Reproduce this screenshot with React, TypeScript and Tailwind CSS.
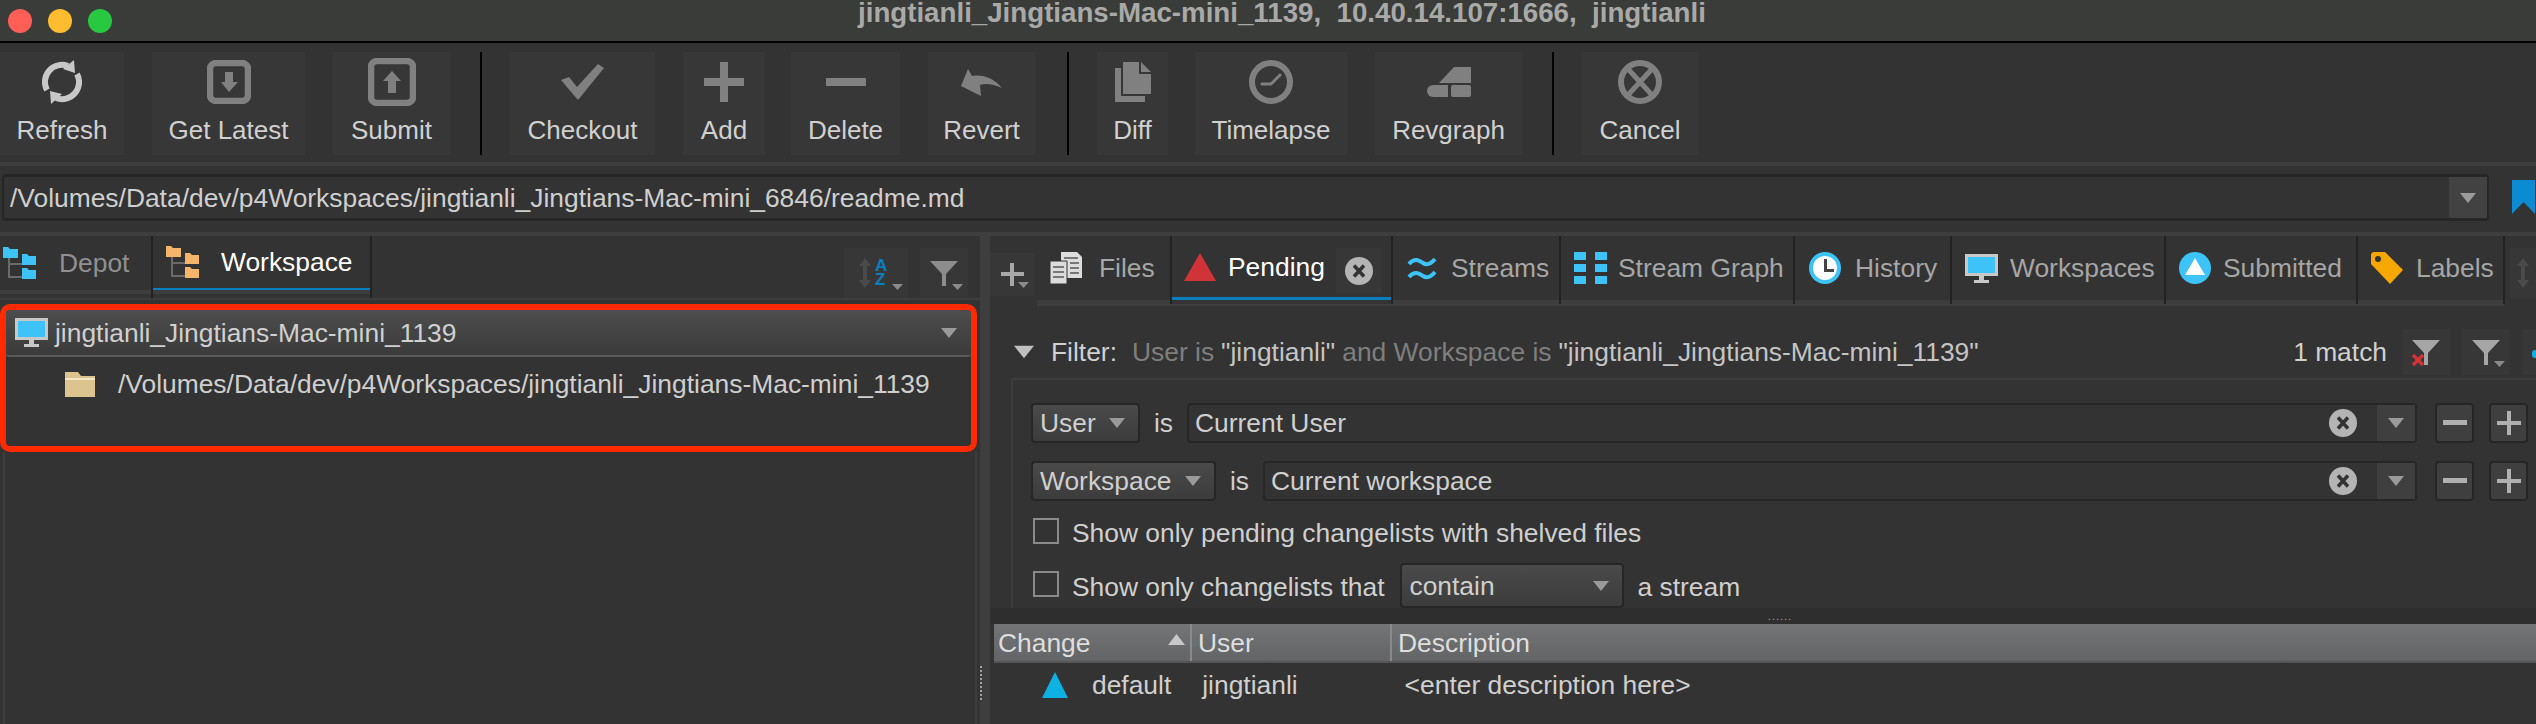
import React from "react";

const G = "#808080";

function Caret({ className = "", color = "#9a9a9a" }: { className?: string; color?: string }) {
  return (
    <svg width="18" height="12" viewBox="0 0 18 12" className={className}>
      <path d="M1 1h16L9 11z" fill={color} />
    </svg>
  );
}

function SmallCaret() {
  return (
    <svg width="11" height="6" viewBox="0 0 11 6" className="absolute right-[5px] bottom-[8px]">
      <path d="M0 0h11L5.5 6z" fill="#8a8a8a" />
    </svg>
  );
}

function RefreshIcon() {
  return (
    <svg width="40" height="44" viewBox="0 0 40 44" fill="none">
      <path d="M5 30A17 17 0 0 1 26 6" stroke="#c8c8c8" strokeWidth="6" />
      <path d="M35 14A17 17 0 0 1 14 38" stroke="#c8c8c8" strokeWidth="6" />
      <path d="M32 0l1 13-12-4z" fill="#c8c8c8" />
      <path d="M9 44 8 31l12 3z" fill="#c8c8c8" />
    </svg>
  );
}

function GetLatestIcon() {
  return (
    <svg width="44" height="44" viewBox="0 0 44 44">
      <rect x="3" y="3" width="38" height="38" rx="6" fill="none" stroke={G} strokeWidth="6.5" />
      <path d="M18 12h8v10h5L22 32 14 22h4z" fill={G} />
    </svg>
  );
}

function SubmitIcon() {
  return (
    <svg width="48" height="48" viewBox="0 0 48 48">
      <rect x="3" y="3" width="42" height="42" rx="6" fill="none" stroke={G} strokeWidth="6.5" />
      <path d="M20 35V23h-5l9-10 9 10h-5v12z" fill={G} />
    </svg>
  );
}

function CheckIcon() {
  return (
    <svg width="44" height="36" viewBox="0 0 44 36">
      <path d="M0 16l8-3 8 10L37 0l6 4-26 32z" fill={G} />
    </svg>
  );
}

function PlusIcon() {
  return (
    <svg width="40" height="40" viewBox="0 0 40 40">
      <path d="M16 0h8v16h16v8H24v16h-8V24H0v-8h16z" fill={G} />
    </svg>
  );
}

function MinusIcon() {
  return (
    <svg width="40" height="8" viewBox="0 0 40 8">
      <rect width="40" height="8" fill={G} />
    </svg>
  );
}

function RevertIcon() {
  return (
    <svg width="41" height="27" viewBox="0 0 41 27">
      <path d="M0 17 7 0l4 7C22 5 34 10 41 19 32 15 25 14 19 16l1 11z" fill={G} />
    </svg>
  );
}

function DiffIcon() {
  return (
    <svg width="36" height="40" viewBox="0 0 36 40">
      <path d="M0 6h6v28h24v6H0z" fill={G} />
      <path d="M8 0h16v12h12v20H8z" fill={G} />
      <path d="M26 0l10 10H26z" fill={G} />
    </svg>
  );
}

function TimelapseIcon() {
  return (
    <svg width="44" height="44" viewBox="0 0 44 44">
      <circle cx="22" cy="22" r="19" fill="none" stroke={G} strokeWidth="6" />
      <path d="M13 24h9l9-9" fill="none" stroke={G} strokeWidth="3" strokeLinecap="round" />
    </svg>
  );
}

function RevgraphIcon() {
  return (
    <svg width="44" height="30" viewBox="0 0 44 30">
      <path d="M27 0h17v16H12z" fill={G} />
      <rect x="24" y="18" width="20" height="12" rx="2" fill={G} />
      <path d="M6 18h15v12H6a6 6 0 0 1 0-12z" fill={G} />
    </svg>
  );
}

function CancelIcon() {
  return (
    <svg width="44" height="44" viewBox="0 0 44 44">
      <circle cx="22" cy="22" r="19" fill="none" stroke={G} strokeWidth="6" />
      <path d="M10 9l24 26M34 9 10 35" stroke={G} strokeWidth="5" />
    </svg>
  );
}

function ClearIcon({ size = 28 }: { size?: number }) {
  return (
    <svg width={size} height={size} viewBox="0 0 28 28">
      <circle cx="14" cy="14" r="14" fill="#b4b4b4" />
      <path d="M9 8.5l10 11M19 8.5 9 19.5" stroke="#333" strokeWidth="3.5" />
    </svg>
  );
}

function TreeIcon({ color }: { color: string }) {
  return (
    <svg width="33" height="32" viewBox="0 0 33 32">
      <path d="M6 9v21h14M6 17h14" fill="none" stroke="#6a6a6a" strokeWidth="2" />
      <path d="M0 2h5l2 2h8v9H0z" fill={color} transform="translate(0 -2)" />
      <path d="M19 7h5l2 2h7v9H19z" fill={color} />
      <path d="M19 21h5l2 2h7v9H19z" fill={color} />
    </svg>
  );
}

function MonitorIcon() {
  return (
    <svg width="33" height="29" viewBox="0 0 33 29">
      <rect x="1.5" y="1.5" width="30" height="19" fill="#3dc3f7" stroke="#c8c8c8" strokeWidth="3" />
      <rect x="14" y="22" width="5" height="4" fill="#c8c8c8" />
      <rect x="9" y="26" width="15" height="3" fill="#c8c8c8" />
    </svg>
  );
}

function FilesIcon() {
  return (
    <svg width="32" height="32" viewBox="0 0 32 32">
      <path d="M11 0h16l5 5v21H11z" fill="#dcdcdc" />
      <path d="M0 9h17v23H0z" fill="#dcdcdc" stroke="#333" strokeWidth="1" />
      <path d="M14 6h14M20 11h9M20 16h9M20 21h9M3 15h11M3 20h11M3 25h11" stroke="#555" strokeWidth="1.5" />
    </svg>
  );
}

function StreamsIcon() {
  return (
    <svg width="30" height="24" viewBox="0 0 30 24" fill="none">
      <path d="M2 8c6-7 11-3 14-1s7 2 12-4" stroke="#3dc3f7" strokeWidth="4" />
      <path d="M2 21c6-7 11-3 14-1s7 2 12-4" stroke="#3dc3f7" strokeWidth="4" />
    </svg>
  );
}

function GridIcon() {
  return (
    <svg width="33" height="32" viewBox="0 0 33 32" fill="#3dc3f7">
      <rect width="12" height="8" />
      <rect x="21" width="12" height="8" />
      <rect y="12" width="12" height="8" />
      <rect x="21" y="12" width="12" height="8" />
      <rect y="24" width="12" height="8" />
      <rect x="21" y="24" width="12" height="8" />
    </svg>
  );
}

function HistoryIcon() {
  return (
    <svg width="32" height="32" viewBox="0 0 32 32">
      <circle cx="16" cy="16" r="16" fill="#3dc3f7" />
      <circle cx="16" cy="16" r="12" fill="#fff" />
      <path d="M15 7h3v10h7v3H15z" fill="#444" />
    </svg>
  );
}

function SubmittedIcon() {
  return (
    <svg width="32" height="32" viewBox="0 0 32 32">
      <circle cx="16" cy="16" r="16" fill="#3dc3f7" />
      <path d="M16 6l10 17H6z" fill="#fff" />
    </svg>
  );
}

function LabelIcon() {
  return (
    <svg width="32" height="32" viewBox="0 0 32 32">
      <path d="M2 0h12l18 18-13 14L0 12V2z" fill="#f6a800" />
      <circle cx="7" cy="7" r="3" fill="#333" />
    </svg>
  );
}

function SortIcon() {
  return (
    <svg width="30" height="42" viewBox="0 -6 30 42" className="absolute left-[15px] top-[4px]">
      <path d="M6 0l6 8H8v14h4l-6 8-6-8h4V8H0z" fill="#4a4a4a" />
      <text x="16" y="13" fontSize="17" fontWeight="700" fill="#0a7fc0">A</text>
      <text x="16" y="27" fontSize="17" fontWeight="700" fill="#0a7fc0">Z</text>
    </svg>
  );
}

function FunnelIcon({ color = "#8c8c8c" }: { color?: string }) {
  return (
    <svg width="28" height="25" viewBox="0 0 28 25">
      <path d="M0 0h28L16 13v12h-4V13z" fill={color} />
    </svg>
  );
}

const toolbar = [
  { label: "Refresh", icon: <RefreshIcon />, cls: "w-[124px]" },
  { label: "Get Latest", icon: <GetLatestIcon />, cls: "ml-[28px] w-[153px]" },
  { label: "Submit", icon: <SubmitIcon />, cls: "ml-[28px] w-[117px]" },
  { sep: true, cls: "ml-[30px]" },
  { label: "Checkout", icon: <CheckIcon />, cls: "ml-[28px] w-[145px]" },
  { label: "Add", icon: <PlusIcon />, cls: "ml-[28px] w-[82px]" },
  { label: "Delete", icon: <MinusIcon />, cls: "ml-[26px] w-[109px]" },
  { label: "Revert", icon: <RevertIcon />, cls: "ml-[28px] w-[107px]" },
  { sep: true, cls: "ml-[32px]" },
  { label: "Diff", icon: <DiffIcon />, cls: "ml-[28px] w-[71px]" },
  { label: "Timelapse", icon: <TimelapseIcon />, cls: "ml-[27px] w-[152px]" },
  { label: "Revgraph", icon: <RevgraphIcon />, cls: "ml-[28px] w-[147px]" },
  { sep: true, cls: "ml-[30px]" },
  { label: "Cancel", icon: <CancelIcon />, cls: "ml-[28px] w-[116px]" },
];

function Toolbar() {
  return (
    <div className="flex h-[119px] shrink-0 pt-[9px] pb-[7px] bg-[#333333]">
      {toolbar.map((item, i) =>
        item.sep ? (
          <div key={i} className={`w-[2px] bg-black ${item.cls}`} />
        ) : (
          <div key={i} className={`flex flex-col items-center bg-[#373737] ${item.cls}`}>
            <div className="flex h-[60px] items-center justify-center">{item.icon}</div>
            <div className="mt-[3px] text-[26px] text-[#d0d0d0] leading-[30px]">{item.label}</div>
          </div>
        )
      )}
    </div>
  );
}

const tabs = [
  { label: "Files", icon: <FilesIcon />, cls: "w-[133px] pl-[13px] gap-[17px]" },
  { label: "Pending", icon: null, cls: "" },
  { label: "Streams", icon: <StreamsIcon />, cls: "w-[166px] pl-[14px] gap-[14px]" },
  { label: "Stream Graph", icon: <GridIcon />, cls: "w-[232px] pl-[13px] gap-[11px]" },
  { label: "History", icon: <HistoryIcon />, cls: "w-[155px] pl-[14px] gap-[14px]" },
  { label: "Workspaces", icon: <MonitorIcon />, cls: "w-[212px] pl-[13px] gap-[12px]" },
  { label: "Submitted", icon: <SubmittedIcon />, cls: "w-[190px] pl-[13px] gap-[12px]" },
  { label: "Labels", icon: <LabelIcon />, cls: "w-[145px] pl-[13px] gap-[13px]" },
];

function RightTabs() {
  return (
    <div className="relative flex h-[70px] shrink-0">
      <div className="absolute left-[47px] right-[32px] bottom-0 h-[2px] bg-[#3f3f3f]" />
      <div className="relative mt-[17px] h-[43px] w-[44px] bg-[#373737]">
        <svg width="23" height="23" viewBox="0 0 23 23" className="absolute left-[11px] top-[10px]">
          <path d="M9 0h4v9h10v4H13v10H9V13H0V9h9z" fill="#a8a8a8" />
        </svg>
        <SmallCaret />
      </div>
      <div className="w-[3px]" />
      {tabs.map((t) =>
        t.label === "Pending" ? (
          <div key={t.label} className="flex h-[68px] w-[221px] flex-col border-r-2 border-[#222]">
            <div className="relative flex h-[61px] items-center pl-[12px] text-white">
              <svg width="32" height="28" viewBox="0 0 32 28">
                <path d="M16 0l16 28H0z" fill="#d13438" />
              </svg>
              <span className="ml-[12px]">Pending</span>
              <div className="absolute left-[164px] top-[12px] flex h-[46px] w-[46px] items-center justify-center bg-[#373737]">
                <ClearIcon />
              </div>
            </div>
            <div className="h-[3px] bg-[#0a7fc0]" />
          </div>
        ) : (
          <div key={t.label} className="flex h-[68px] flex-col border-r-2 border-[#222]">
            <div className={`flex h-[64px] items-center text-[#a6a6a6] ${t.cls}`}>
              {t.icon}
              <span>{t.label}</span>
            </div>
            <div className="h-[4px] bg-[#3d3d3d]" />
          </div>
        )
      )}
      <div className="relative ml-[5px] mt-[12px] h-[50px] flex-1 bg-[#373737]">
        <svg width="14" height="30" viewBox="0 0 14 30" className="absolute left-[6px] top-[10px]">
          <path d="M7 0l6 8H9v14h4l-6 8-6-8h4V8H1z" fill="#4a4a4a" />
        </svg>
      </div>
    </div>
  );
}

function Combo({ label, cls }: { label: string; cls: string }) {
  return (
    <div className={`flex h-[40px] items-center justify-between rounded-[4px] border-2 border-[#262626] bg-gradient-to-b from-[#4a4a4a] to-[#3c3c3c] pl-[7px] pr-[12px] text-[#cfcfcf] ${cls}`}>
      <span>{label}</span>
      <Caret />
    </div>
  );
}

function SquareBtn({ plus }: { plus?: boolean }) {
  return (
    <div className="flex h-[40px] w-[39px] items-center justify-center rounded-[4px] border-2 border-[#262626] bg-[#3f3f3f]">
      <svg width="24" height="24" viewBox="0 0 24 24">
        {plus ? <path d="M10 0h4v10h10v4H14v10h-4V14H0v-4h10z" fill="#b0b0b0" /> : <rect y="9" width="24" height="5" fill="#b0b0b0" />}
      </svg>
    </div>
  );
}

function FilterRow({ field, fieldCls, value }: { field: string; fieldCls: string; value: string }) {
  return (
    <div className="flex h-[40px] items-center pl-[18px] pr-[8px]">
      <Combo label={field} cls={fieldCls} />
      <span className="ml-[14px] w-[33px] text-[#cfcfcf]">is</span>
      <div className="flex h-[40px] flex-1 items-center rounded-[4px] border-2 border-[#262626] pl-[6px] text-[#cfcfcf]">
        <span className="flex-1">{value}</span>
        <ClearIcon />
        <div className="ml-[20px] flex h-full w-[38px] items-center justify-center bg-[#3f3f3f]">
          <Caret />
        </div>
      </div>
      <div className="ml-[18px]"><SquareBtn /></div>
      <div className="ml-[15px]"><SquareBtn plus /></div>
    </div>
  );
}

function FilterPanel() {
  return (
    <div className="mt-[24px] flex min-h-0 flex-col">
      <div className="flex h-[48px] items-center pl-[25px] pb-[4px]">
        <Caret className="scale-125" color="#c0c0c0" />
        <span className="ml-[18px] text-[#d0d0d0]">Filter:</span>
        <span className="ml-[15px] text-[#7f7f7f]">User is </span>
        <span className="ml-[7px] text-[#c4c4c4]">"jingtianli"</span>
        <span className="ml-[7px] text-[#7f7f7f]">and Workspace is </span>
        <span className="ml-[7px] text-[#c4c4c4]">"jingtianli_Jingtians-Mac-mini_1139"</span>
        <span className="ml-auto text-[#d0d0d0]">1 match</span>
        <div className="relative ml-[15px] flex h-[46px] w-[48px] items-center justify-center bg-[#373737]">
          <FunnelIcon color="#a6a6a6" />
          <svg width="14" height="14" viewBox="0 0 14 14" className="absolute left-[9px] bottom-[8px]">
            <path d="M2 2l10 10M12 2 2 12" stroke="#d13438" strokeWidth="3.5" />
          </svg>
        </div>
        <div className="relative ml-[12px] flex h-[46px] w-[48px] items-center justify-center bg-[#373737]">
          <FunnelIcon color="#a6a6a6" />
          <SmallCaret />
        </div>
        <div className="ml-[12px] h-[46px] w-[14px] bg-[#373737] pt-[21px] pl-[10px]">
          <div className="h-[8px] w-[4px] rounded-l-[3px] bg-[#0db1e4]" />
        </div>
      </div>
      <div className="ml-[21px] flex h-[230px] flex-col overflow-hidden border-t-2 border-l-2 border-[#3c3c3c]">
        <div className="mt-[23px] flex flex-col gap-[18px]">
          <FilterRow field="User" fieldCls="w-[109px]" value="Current User" />
          <FilterRow field="Workspace" fieldCls="w-[185px]" value="Current workspace" />
        </div>
        <div className="mt-[17px] flex h-[26px] items-center pl-[20px]">
          <div className="h-[26px] w-[26px] border-2 border-[#8a8a8a]" />
          <span className="ml-[13px] mt-[4px] text-[#cfcfcf]">Show only pending changelists with shelved files</span>
        </div>
        <div className="mt-[19px] flex h-[45px] items-center pl-[20px]">
          <div className="mb-[4px] h-[26px] w-[26px] border-2 border-[#8a8a8a]" />
          <span className="ml-[13px] mt-[2px] text-[#cfcfcf]">Show only changelists that</span>
          <Combo label="contain" cls="ml-[16px] !h-[45px] w-[224px]" />
          <span className="ml-[13px] mt-[2px] text-[#cfcfcf]">a stream</span>
        </div>
      </div>
    </div>
  );
}

function Table() {
  return (
    <div className="flex flex-1 flex-col">
      <div className="flex h-[16px] items-center justify-center bg-[#2e2e2e] pl-[34px]">
        <span className="text-[11px] leading-[11px] tracking-[1px] text-[#a0a0a0]">......</span>
      </div>
      <div className="ml-[4px] flex h-[39px] bg-gradient-to-b from-[#747577] to-[#636466] text-[#dedede] border-b-2 border-[#555]">
        <div className="relative flex w-[198px] items-center pl-[4px] border-r-2 border-[#8a8a8a]">
          Change
          <svg width="17" height="11" viewBox="0 0 17 11" className="absolute left-[174px] top-[10px]">
            <path d="M8.5 0 17 11H0z" fill="#c8c8c8" />
          </svg>
        </div>
        <div className="flex w-[200px] items-center pl-[6px] border-r-2 border-[#8a8a8a]">User</div>
        <div className="flex flex-1 items-center pl-[6px]">Description</div>
      </div>
      <div className="flex h-[44px] items-center text-[#cfcfcf]">
        <svg width="26" height="26" viewBox="0 0 26 26" className="ml-[52px]">
          <path d="M13 0l13 26H0z" fill="#0db1e4" />
        </svg>
        <span className="ml-[24px]">default</span>
        <span className="ml-[31px]">jingtianli</span>
        <span className="ml-[107px]">&lt;enter description here&gt;</span>
      </div>
    </div>
  );
}

export default function App() {
  return (
    <div className="flex h-[724px] w-[2536px] flex-col overflow-hidden bg-[#333333] font-['Liberation_Sans',sans-serif] text-[26.4px] leading-[30px]">
      {/* title bar */}
      <div className="relative flex h-[43px] shrink-0 items-center border-b-2 border-black bg-[#3a3c39] pl-[8px]">
        <div className="flex gap-[16px]">
          <div className="h-[24px] w-[24px] rounded-full bg-[#ff5f57]" />
          <div className="h-[24px] w-[24px] rounded-full bg-[#febc2e]" />
          <div className="h-[24px] w-[24px] rounded-full bg-[#28c840]" />
        </div>
        <div className="absolute left-[858px] top-0 whitespace-pre text-[27.7px] leading-[26px] font-bold text-[#a9aaa8]">
          jingtianli_Jingtians-Mac-mini_1139,  10.40.14.107:1666,  jingtianli
        </div>
      </div>

      <Toolbar />
      <div className="h-[4px] shrink-0 bg-[#3e3e3e]" />

      {/* path bar */}
      <div className="flex h-[66px] shrink-0 items-start bg-[#333333] pl-[2px] pt-[8px]">
        <div className="flex h-[47px] w-[2487px] items-center rounded-[4px] border-y-[3px] border-x-2 border-[#262626] pl-[6px] text-[#cfcfcf]">
          <span className="flex-1">/Volumes/Data/dev/p4Workspaces/jingtianli_Jingtians-Mac-mini_6846/readme.md</span>
          <div className="flex h-full w-[38px] items-center justify-center bg-[#424242]">
            <Caret />
          </div>
        </div>
        <svg width="23" height="34" viewBox="0 0 23 34" className="ml-[23px] mt-[6px]">
          <path d="M0 0h23v34L11.500 22 0 34z" fill="#0a8bd2" />
        </svg>
      </div>
      <div className="h-[4px] shrink-0 bg-[#3e3e3e]" />

      <div className="flex min-h-0 flex-1">
        {/* left panel */}
        <div className="flex w-[980px] shrink-0 flex-col">
          <div className="flex h-[62px] shrink-0">
            <div className="flex w-[153px] flex-col border-r-2 border-[#222]">
              <div className="flex h-[54px] items-center pl-[3px] text-[#909090]">
                <TreeIcon color="#3dc3f7" />
                <span className="ml-[23px]">Depot</span>
              </div>
              <div className="h-[4px] bg-[#3d3d3d]" />
            </div>
            <div className="flex w-[219px] flex-col border-r-2 border-[#222]">
              <div className="flex h-[52px] items-center pl-[13px] text-white">
                <TreeIcon color="#f4b46a" />
                <span className="ml-[22px]">Workspace</span>
              </div>
              <div className="h-[2px] bg-[#0a7fc0]" />
              <div className="h-[4px] bg-[#3d3d3d]" />
            </div>
            <div className="relative ml-[472px] mt-[12px] h-[50px] w-[64px] bg-[#373737]">
              <SortIcon />
              <SmallCaret />
            </div>
            <div className="relative ml-[12px] mt-[12px] flex h-[50px] w-[48px] items-center justify-center bg-[#373737]">
              <FunnelIcon />
              <SmallCaret />
            </div>
          </div>
          <div className="h-[2px] shrink-0 bg-[#3d3d3d]" />
          <div className="mt-[4px] h-[148px] w-[977px] shrink-0 rounded-[10px] border-[6px] border-[#ff2a00]">
            <div className="flex h-[47px] items-center rounded-[3px] border-b-2 border-[#5a5a5a] bg-gradient-to-b from-[#4d4d4d] to-[#3b3b3b] pl-[9px] pr-[13px] text-[#d0d0d0]">
              <MonitorIcon />
              <span className="ml-[7px] flex-1">jingtianli_Jingtians-Mac-mini_1139</span>
              <Caret />
            </div>
            <div className="mt-[7px] flex h-[40px] items-center pl-[59px] text-[#cfcfcf]">
              <svg width="30" height="25" viewBox="0 0 30 25">
                <path d="M0 0h13l3 4h14v21H0z" fill="#dcc48e" />
                <rect y="6" width="30" height="2" fill="#f3e6c4" />
              </svg>
              <span className="ml-[23px]">/Volumes/Data/dev/p4Workspaces/jingtianli_Jingtians-Mac-mini_1139</span>
            </div>
          </div>
          <div className="flex flex-1 px-[3px]">
            <div className="flex-1 border-x-2 border-[#3d3d3d]" />
          </div>
        </div>

        {/* vertical splitter */}
        <div className="flex w-[10px] shrink-0 flex-col items-center justify-end bg-[#3e3e3e] pb-[24px]">
          <div className="mr-[8px] h-[34px] border-l-2 border-dotted border-[#a0a0a0]" />
        </div>

        {/* right panel */}
        <div className="flex min-w-0 flex-1 flex-col">
          <RightTabs />
          <FilterPanel />
          <Table />
        </div>
      </div>
    </div>
  );
}
